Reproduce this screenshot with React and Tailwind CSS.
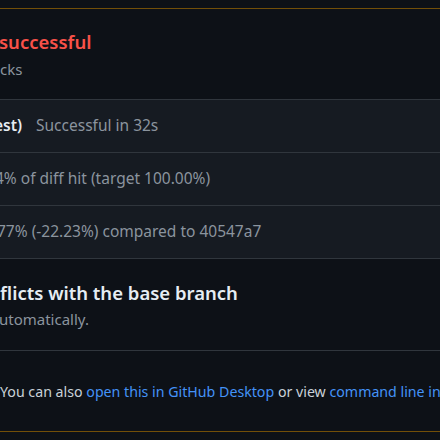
import React from 'react';

const font = { fontFamily: '"Segoe UI", "Noto Sans", "Liberation Sans", sans-serif' };

const checks = [
    { id: 'test', lead: 'est)', text: 'Successful in 32s', shift: '-ml-[6px]' },
    { id: 'patch', lead: '', text: '4% of diff hit (target 100.00%)', shift: '-ml-[5px]' },
    { id: 'project', lead: '', text: '77% (-22.23%) compared to 40547a7', shift: '-ml-[3px]' },
];

function CheckRow({ row }) {
    return (
        <div className="h-[53px] flex items-center border-t border-[#30363d] bg-[#161b22] whitespace-nowrap">
            <div className={`flex items-center text-[15.5px] ${row.shift || ''}`}>
                {row.lead && <span className="font-semibold text-[#e6edf3]">{row.lead}</span>}
                <span className={`text-[#8b949e] ${row.lead ? 'ml-[14px]' : ''}`}>{row.text}</span>
            </div>
        </div>
    );
}

export default function App() {
    return (
        <div className="w-[440px] h-[440px] overflow-hidden bg-[#0d1117]" style={font}>
            <div className="h-[8px]" />
            <div className="border-y border-[#9e6a03]/70">
                {/* Status summary */}
                <div className="h-[90px] flex flex-col justify-center whitespace-nowrap">
                    <div className="text-[18.5px] font-semibold text-[#f85149] leading-6 -ml-[1px]">successful</div>
                    <div className="text-[15px] text-[#8b949e] leading-5 mt-[5px]">cks</div>
                </div>

                {checks.map(row => (
                    <CheckRow key={row.id} row={row} />
                ))}

                {/* Conflict notice */}
                <div className="h-[92px] flex flex-col justify-center border-t border-[#30363d] whitespace-nowrap">
                    <div className="text-[18.5px] font-semibold text-[#e6edf3] leading-6 mt-[1px]">flicts with the base branch</div>
                    <div className="text-[15px] text-[#8b949e] leading-5 mt-[4px] -ml-[1px]">utomatically.</div>
                </div>

                <div className="h-[81px] flex items-center border-t border-[#30363d] whitespace-nowrap overflow-hidden">
                    <p className="text-[14.2px] text-[#c9d1d9] mt-[1px]">
                        You can also{' '}
                        <a className="text-[#4493f8]">open this in GitHub Desktop</a>
                        {' '}or view{' '}
                        <a className="text-[#4493f8]">command line instructions</a>.
                    </p>
                </div>
            </div>
        </div>
    );
}
